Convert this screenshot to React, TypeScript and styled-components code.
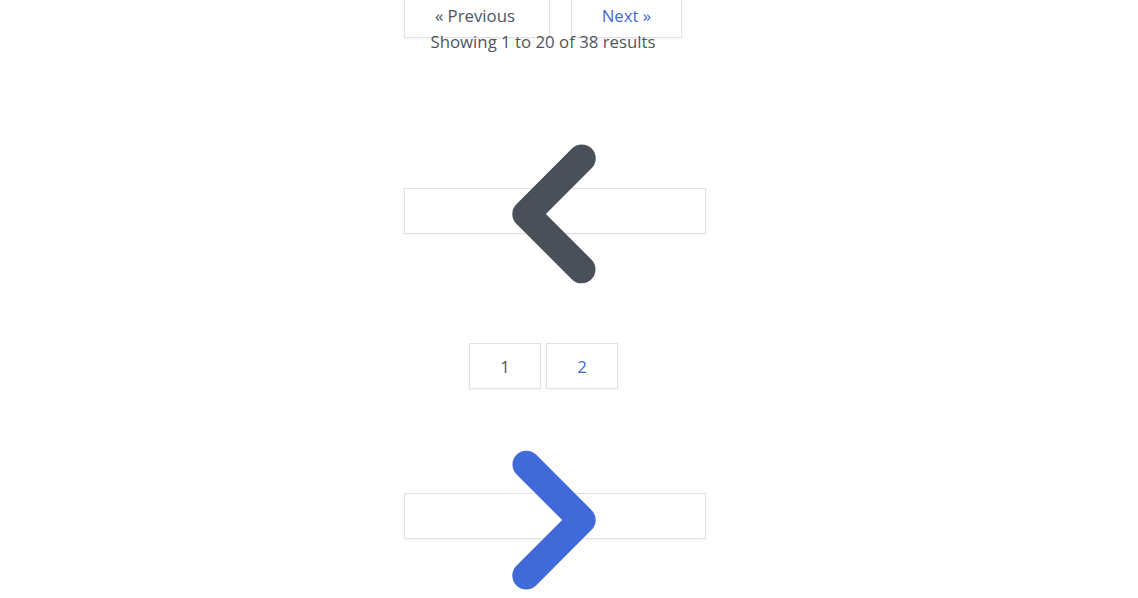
import React from "react";
import styled, { createGlobalStyle } from "styled-components";

const Global = createGlobalStyle`
  html, body { margin: 0; padding: 0; background: #ffffff; }
  body { font-family: "Open Sans", "Noto Sans", Arial, sans-serif; }
`;

const Page = styled.div`
  width: 1138px;
  height: 598px;
  overflow: hidden;
  padding-left: 404px;
  box-sizing: border-box;
`;

const Nav = styled.nav`
  display: flex;
  flex-direction: column;
  width: 302px;
`;

const Simple = styled.div`
  width: 278px;
  display: flex;
  flex-direction: column;
`;

const TopRow = styled.div`
  display: flex;
  gap: 21px;
  margin-top: -8px;
`;

const LinkBox = styled.span<{ $w: number; $active?: boolean; $nudge?: number }>`
  box-sizing: border-box;
  display: flex;
  align-items: center;
  justify-content: center;
  width: ${(p) => p.$w}px;
  height: 46px;
  border: 1px solid #e1e2e7;
  background: #ffffff;
  box-shadow: 0 1px 3px rgba(0, 0, 0, 0.05);
  font-size: 16.8px;
  color: ${(p) => (p.$active ? "#3f6ad8" : "#50555d")};
  padding-top: 0;
  padding-right: ${(p) => p.$nudge ?? 0}px;
`;

const Summary = styled.p`
  margin: -8px 0 0 0;
  text-align: center;
  font-size: 16.8px;
  line-height: 24px;
  color: #50555d;
`;

const ChevronBox = styled.div<{ $top: number; $shift: number }>`
  box-sizing: border-box;
  width: 302px;
  height: 46px;
  margin-top: ${(p) => p.$top}px;
  border: 1px solid #e1e2e7;
  background: #ffffff;
  box-shadow: 0 1px 3px rgba(0, 0, 0, 0.05);
  display: flex;
  align-items: center;
  justify-content: center;
  overflow: visible;

  svg {
    flex: none;
    margin-top: ${(p) => p.$shift}px;
    margin-left: -3px;
  }
`;

const Pages = styled.div`
  width: 278px;
  box-sizing: border-box;
  display: flex;
  gap: 5px;
  padding-left: 65px;
  margin-top: 109px;
`;

const Chevron = ({ dir, color }: { dir: "left" | "right"; color: string }) => (
  <svg width="278" height="278" viewBox="0 0 20 20" fill={color}>
    {dir === "left" ? (
      <path
        fillRule="evenodd"
        clipRule="evenodd"
        d="M12.707 5.293a1 1 0 010 1.414L9.414 10l3.293 3.293a1 1 0 01-1.414 1.414l-4-4a1 1 0 010-1.414l4-4a1 1 0 011.414 0z"
      />
    ) : (
      <path
        fillRule="evenodd"
        clipRule="evenodd"
        d="M7.293 14.707a1 1 0 010-1.414L10.586 10 7.293 6.707a1 1 0 011.414-1.414l4 4a1 1 0 010 1.414l-4 4a1 1 0 01-1.414 0z"
      />
    )}
  </svg>
);

export default function App() {
  return (
    <>
      <Global />
      <Page>
        <Nav>
          <Simple>
            <TopRow>
              <LinkBox $w={147} $nudge={4}>« Previous</LinkBox>
              <LinkBox $w={112} $active>
                Next »
              </LinkBox>
            </TopRow>
            <Summary>Showing 1 to 20 of 38 results</Summary>
          </Simple>
          <ChevronBox $top={134} $shift={6}>
            <Chevron dir="left" color="#4a5059" />
          </ChevronBox>
          <Pages>
            <LinkBox $w={72}>1</LinkBox>
            <LinkBox $w={72} $active>
              2
            </LinkBox>
          </Pages>
          <ChevronBox $top={104} $shift={8}>
            <Chevron dir="right" color="#3f6ad8" />
          </ChevronBox>
        </Nav>
      </Page>
    </>
  );
}
